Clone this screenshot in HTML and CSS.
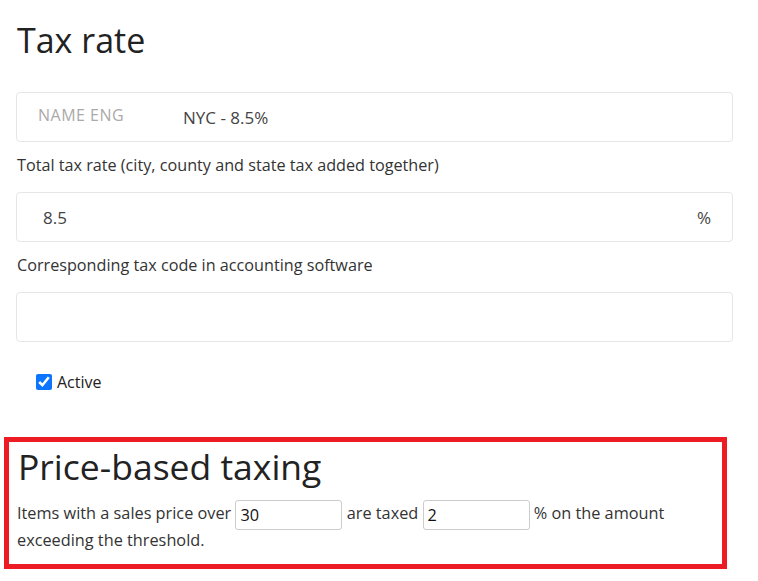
FILE: index.html
```html
<!DOCTYPE html>
<html>
<head>
<meta charset="utf-8">
<link rel="stylesheet" href="styles.css">
</head>
<body>
<div class="page">
  <h1 class="title">Tax rate</h1>
  <div class="field field-name">
    <span class="field-label">NAME ENG</span>
    <span class="field-value">NYC - 8.5%</span>
  </div>
  <div class="label">Total tax rate (city, county and state tax added together)</div>
  <div class="field field-rate">
    <span class="field-value">8.5</span>
    <span class="field-suffix">%</span>
  </div>
  <div class="label">Corresponding tax code in accounting software</div>
  <div class="field field-code"></div>
  <label class="check"><input type="checkbox" checked><span>Active</span></label>
  <div class="highlight">
    <h2 class="title title-2">Price-based taxing</h2>
    <p class="para">Items with a sales price over <input class="inline-input" type="text" value="30"> are taxed <input class="inline-input" type="text" value="2"> % on the amount exceeding the threshold.</p>
  </div>
</div>
</body>
</html>
```
FILE: styles.css
```css
* { box-sizing: border-box; }
html, body { margin: 0; padding: 0; background: #fff; }
body { font-family: "Open Sans", "Liberation Sans", sans-serif; color: #333; }
.page { width: 717px; margin-left: 16px; padding-top: 18px; }
.title { margin: 0; font-weight: 400; font-size: 34px; line-height: 44px; color: #222; padding-left: 1px; }
.field { height: 50px; border: 1px solid #e6e6e6; border-radius: 4px; display: flex; align-items: center; font-size: 17px; color: #444; }
.field-name { margin-top: 30px; padding-left: 21px; }
.field-label { width: 145px; color: #aaa; font-size: 16px; letter-spacing: 0.5px; text-transform: uppercase; margin-top: -5px; }
.field-rate { padding: 0 21px 0 26px; justify-content: space-between; }
.label { font-size: 16.2px; color: #333; height: 50px; display: flex; align-items: center; padding: 0 0 5px 1px; }
.check { display: flex; align-items: center; margin-top: 29px; margin-left: 20px; font-size: 16px; color: #222; }
.check input { width: 16px; height: 16px; margin: 0 5px 0 0; accent-color: #0b75ff; }
.highlight { margin-top: 44px; margin-left: -12px; width: 723px; border: 5px solid #ed1c24; padding: 2px 8px 10px 8px; }
.title-2 { font-size: 35.5px; line-height: 44px; }
.para { margin: 12px 0 0 0; font-size: 16.3px; line-height: 27px; color: #333; }
.inline-input { width: 107px; height: 30px; margin: -3px 0; border: 1px solid #ccc; border-radius: 3px; font: inherit; color: #111; padding: 0 4px; vertical-align: middle; }
```
